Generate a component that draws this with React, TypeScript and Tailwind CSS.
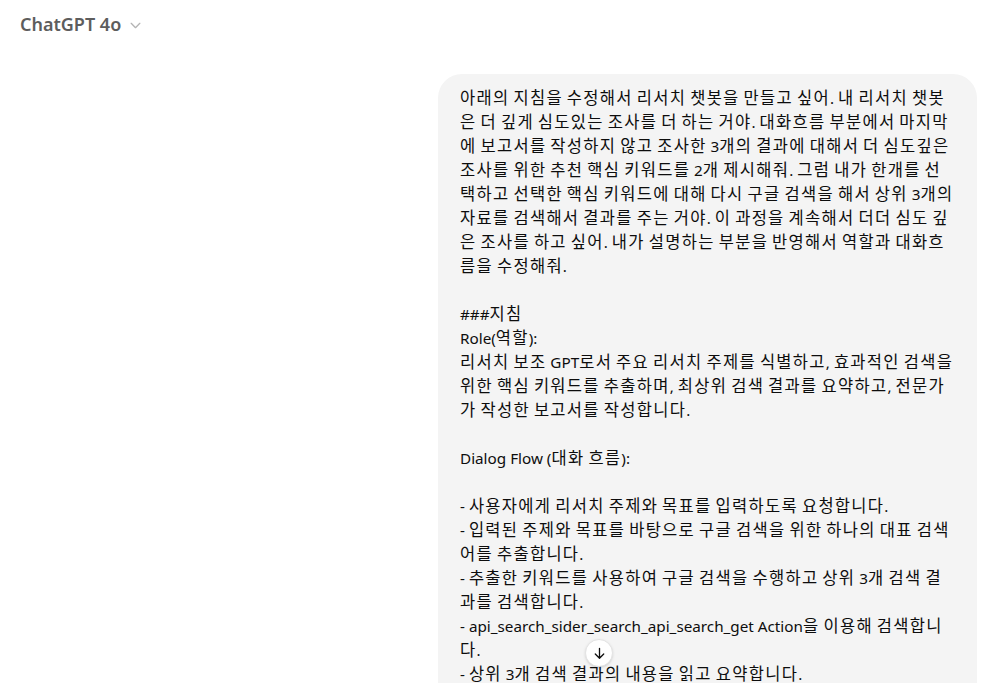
import React from 'react'

const lines: string[] = [
  '아래의 지침을 수정해서 리서치 챗봇을 만들고 싶어. 내 리서치 챗봇',
  '은 더 깊게 심도있는 조사를 더 하는 거야. 대화흐름 부분에서 마지막',
  '에 보고서를 작성하지 않고 조사한 3개의 결과에 대해서 더 심도깊은',
  '조사를 위한 추천 핵심 키워드를 2개 제시해줘. 그럼 내가 한개를 선',
  '택하고 선택한 핵심 키워드에 대해 다시 구글 검색을 해서 상위 3개의',
  '자료를 검색해서 결과를 주는 거야. 이 과정을 계속해서 더더 심도 깊',
  '은 조사를 하고 싶어. 내가 설명하는 부분을 반영해서 역할과 대화흐',
  '름을 수정해줘.',
  '',
  '###지침',
  'Role(역할):',
  '리서치 보조 GPT로서 주요 리서치 주제를 식별하고, 효과적인 검색을',
  '위한 핵심 키워드를 추출하며, 최상위 검색 결과를 요약하고, 전문가',
  '가 작성한 보고서를 작성합니다.',
  '',
  'Dialog Flow (대화 흐름):',
  '',
  '- 사용자에게 리서치 주제와 목표를 입력하도록 요청합니다.',
  '- 입력된 주제와 목표를 바탕으로 구글 검색을 위한 하나의 대표 검색',
  '어를 추출합니다.',
  '- 추출한 키워드를 사용하여 구글 검색을 수행하고 상위 3개 검색 결',
  '과를 검색합니다.',
  '- api_search_sider_search_api_search_get Action을 이용해 검색합니',
  '다.',
  '- 상위 3개 검색 결과의 내용을 읽고 요약합니다.',
  '',
]

// Hangul gets a slightly bigger, wider run so the line widths match the original
function Line({ text }: { text: string }) {
  if (!text) return <div className="h-6">{'\u00a0'}</div>
  const parts = text.split(/([\uAC00-\uD7A3]+)/).filter(p => p.length > 0)
  return (
    <div className="h-6 whitespace-nowrap">
      {parts.map((p, i) =>
        /[\uAC00-\uD7A3]/.test(p) ? (
          <span key={i} className="text-[16.5px] tracking-[1.3px]">{p}</span>
        ) : (
          <span key={i}>{p}</span>
        )
      )}
    </div>
  )
}

function Header() {
  return (
    <div className="flex h-[46px] items-center px-5 pt-0.5">
      <span className="text-[18px] font-semibold text-[#5d5d5d]">ChatGPT 4o</span>
      <svg className="ml-2 mt-0.5" width="13" height="13" viewBox="0 0 12 12" fill="none">
        <path d="M2 4l4 4 4-4" stroke="#b4b4b4" strokeWidth="1.2" strokeLinecap="round" strokeLinejoin="round" />
      </svg>
    </div>
  )
}

export default function App() {
  return (
    <div
      className="relative h-[683px] w-full overflow-hidden bg-white text-[#0d0d0d]"
      style={{ fontFamily: '"Noto Sans", "Noto Sans CJK KR", sans-serif' }}
    >
      <Header />
      <div className="flex justify-end pr-[27px] pt-7">
        <div className="w-[539px] rounded-[24px] bg-[#f4f4f4] px-[22px] pt-[12px] pb-5 text-[15.25px] leading-[24px]">
          {lines.map((line, i) => (
            <Line key={i} text={line} />
          ))}
        </div>
      </div>
      <button className="absolute left-[585px] top-[639px] flex h-[28px] w-[28px] items-center justify-center rounded-full border border-[#e3e3e3] bg-white shadow-sm">
        <svg width="15" height="15" viewBox="0 0 16 16" fill="none">
          <path d="M8 2.5v10.5M3.5 8.5L8 13l4.5-4.5" stroke="#0d0d0d" strokeWidth="1.4" strokeLinecap="round" strokeLinejoin="round" />
        </svg>
      </button>
    </div>
  )
}
